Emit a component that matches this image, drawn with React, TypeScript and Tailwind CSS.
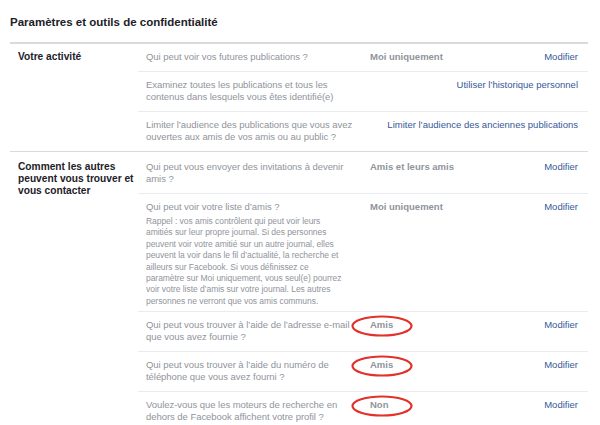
import React from 'react'

type Row = {
  lines: string[]
  note?: string[]
  value?: string
  link: string
  circled?: boolean
}

type Section = {
  label: string[]
  rows: Row[]
}

const sections: Section[] = [
  {
    label: ['Votre activité'],
    rows: [
      { lines: ['Qui peut voir vos futures publications ?'], value: 'Moi uniquement', link: 'Modifier' },
      {
        lines: ['Examinez toutes les publications et tous les', 'contenus dans lesquels vous êtes identifié(e)'],
        link: 'Utiliser l’historique personnel',
      },
      {
        lines: ['Limiter l’audience des publications que vous avez', 'ouvertes aux amis de vos amis ou au public ?'],
        link: 'Limiter l’audience des anciennes publications',
      },
    ],
  },
  {
    label: ['Comment les autres', 'peuvent vous trouver et', 'vous contacter'],
    rows: [
      {
        lines: ['Qui peut vous envoyer des invitations à devenir', 'amis ?'],
        value: 'Amis et leurs amis',
        link: 'Modifier',
      },
      {
        lines: ['Qui peut voir votre liste d’amis ?'],
        note: [
          'Rappel : vos amis contrôlent qui peut voir leurs',
          'amitiés sur leur propre journal. Si des personnes',
          'peuvent voir votre amitié sur un autre journal, elles',
          'peuvent la voir dans le fil d’actualité, la recherche et',
          'ailleurs sur Facebook. Si vous définissez ce',
          'paramètre sur Moi uniquement, vous seul(e) pourrez',
          'voir votre liste d’amis sur votre journal. Les autres',
          'personnes ne verront que vos amis communs.',
        ],
        value: 'Moi uniquement',
        link: 'Modifier',
      },
      {
        lines: ['Qui peut vous trouver à l’aide de l’adresse e-mail', 'que vous avez fournie ?'],
        value: 'Amis',
        link: 'Modifier',
        circled: true,
      },
      {
        lines: ['Qui peut vous trouver à l’aide du numéro de', 'téléphone que vous avez fourni ?'],
        value: 'Amis',
        link: 'Modifier',
        circled: true,
      },
      {
        lines: ['Voulez-vous que les moteurs de recherche en', 'dehors de Facebook affichent votre profil ?'],
        value: 'Non',
        link: 'Modifier',
        circled: true,
      },
    ],
  },
]

function RedCircle() {
  return (
    <svg
      className="absolute left-[-19px] top-[-4px] pointer-events-none"
      width="62"
      height="22"
      viewBox="0 0 62 22"
      fill="none"
    >
      <ellipse cx="31" cy="11" rx="29.5" ry="9.5" stroke="#e2312a" strokeWidth="2.2" />
    </svg>
  )
}

function SettingRow({ row, first }: { row: Row; first: boolean }) {
  return (
    <div className={`flex pl-2 pr-[10px] py-[7px] ${first ? '' : 'border-t border-[#e9ebee]'}`}>
      <div className="w-[216px] shrink-0 text-[#90949c] text-[9.5px] leading-[12.5px] tracking-[-0.05px] whitespace-nowrap">
        {row.lines.map((l) => (
          <div key={l}>{l}</div>
        ))}
        {row.note && (
          <div className="mt-[3px] mb-[-3.5px] text-[8.5px] leading-[11.4px]">
            {row.note.map((l) => (
              <div key={l}>{l}</div>
            ))}
          </div>
        )}
      </div>
      <div className="flex-1 pl-[8px] text-[#90949c] font-bold text-[9.5px] leading-[12.5px] whitespace-nowrap">
        {row.value && (
          <span className="relative inline-block">
            {row.value}
            {row.circled && <RedCircle />}
          </span>
        )}
      </div>
      <div className="text-right text-[#365899] text-[9.5px] leading-[12.5px] whitespace-nowrap">
        {row.link}
      </div>
    </div>
  )
}

export default function App() {
  return (
    <div
      className="w-[600px] h-[425px] overflow-hidden bg-white"
      style={{ fontFamily: '"Liberation Sans", Helvetica, Arial, sans-serif' }}
    >
      <div className="pl-[10px] pr-[12px]">
        <h1 className="pt-[14px] pb-[12px] text-[11.5px] leading-[16px] font-bold text-[#1d2129]">
          Paramètres et outils de confidentialité
        </h1>
        <div className="border-t-2 border-[#d8dade]">
          {sections.map((s, i) => (
            <div key={s.label[0]} className={`flex ${i > 0 ? 'border-t border-[#d8dade] pt-[2px]' : ''}`}>
              <div className="w-[128px] shrink-0 pl-2 pt-[7px] text-[10.2px] leading-[12px] font-bold text-[#1d2129]">
                {s.label.map((l) => (
                  <div key={l}>{l}</div>
                ))}
              </div>
              <div className="flex-1">
                {s.rows.map((r, j) => (
                  <SettingRow key={r.lines[0]} row={r} first={j === 0} />
                ))}
              </div>
            </div>
          ))}
        </div>
      </div>
    </div>
  )
}
